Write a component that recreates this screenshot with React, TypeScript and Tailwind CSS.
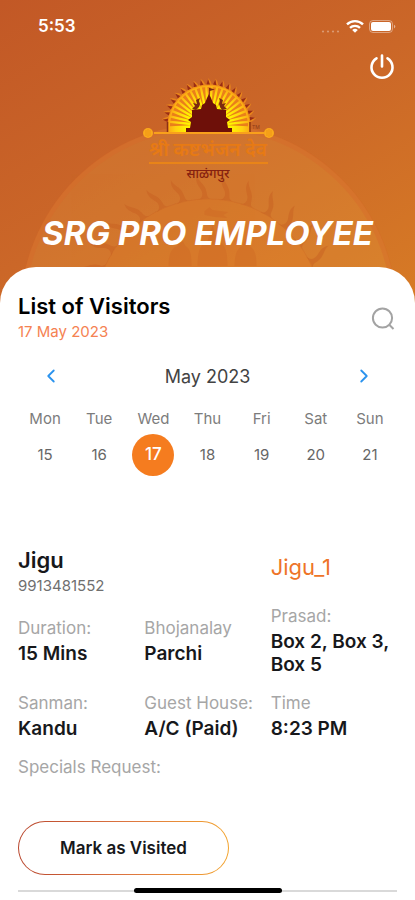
import { useState } from 'react';
import { ChevronLeft, ChevronRight } from 'lucide-react';

const days = [
  { name: 'Mon', date: 15 },
  { name: 'Tue', date: 16 },
  { name: 'Wed', date: 17 },
  { name: 'Thu', date: 18 },
  { name: 'Fri', date: 19 },
  { name: 'Sat', date: 20 },
  { name: 'Sun', date: 21 },
];

const visits = [
  { label: 'Duration:', value: '15 Mins' },
  { label: 'Bhojanalay', value: 'Parchi' },
  { label: 'Prasad:', value: 'Box 2, Box 3, Box 5' },
  { label: 'Sanman:', value: 'Kandu' },
  { label: 'Guest House:', value: 'A/C (Paid)' },
  { label: 'Time', value: '8:23 PM' },
];

function StatusBar() {
  return (
    <div className="flex h-[54px] items-center justify-between pr-[19px] pl-[38px]">
      <span className="text-[17px] font-semibold text-white">5:53</span>
      <svg width="76" height="20" viewBox="0 0 76 20" fill="none">
        <g fill="#fff" opacity="0.35">
          <circle cx="3" cy="14.5" r="1.1" />
          <circle cx="8" cy="14.5" r="1.1" />
          <circle cx="13" cy="14.5" r="1.1" />
          <circle cx="18" cy="14.5" r="1.1" />
        </g>
        <g stroke="#fff" strokeWidth="2.4">
          <path d="M27 7.4a11.5 11.5 0 0 1 16 0" />
          <path d="M30 10.9a7.3 7.3 0 0 1 10 0" />
        </g>
        <path d="M35 15.8l-2.8-2.8a4 4 0 0 1 5.6 0z" fill="#fff" />
        <rect x="49.5" y="3.5" width="23" height="12" rx="3.5" stroke="#fff" opacity="0.4" />
        <rect x="51" y="5" width="20" height="9" rx="2" fill="#fff" />
        <path d="M74 7.8c1.8.6 1.8 3 0 3.6z" fill="#fff" opacity="0.5" />
      </svg>
    </div>
  );
}

// Faded emblem behind the title
function Backdrop() {
  const flames = Array.from({ length: 17 }, (_, i) => -90 + i * 11);
  return (
    <svg
      className="absolute top-0 left-1/2 -translate-x-1/2"
      width="415"
      height="307"
      viewBox="0 0 415 307"
      fill="none"
    >
      <circle cx="208" cy="312" r="188" fill="#eaa844" opacity="0.2" />
      <circle cx="208" cy="312" r="186" stroke="#d8682a" strokeWidth="5" opacity="0.4" />
      <circle cx="208" cy="312" r="113" fill="#e87f22" opacity="0.2" />
      <circle cx="208" cy="312" r="113" stroke="#c65f25" strokeWidth="1" opacity="0.25" />
      <g fill="#c4591f" opacity="0.38">
        {flames.map((a) => (
          <path
            key={a}
            transform={`rotate(${a} 208 312)`}
            d="M201 200c5-2 6-6 4-10-3-5-6-8-4-15 1 6 8 9 9 16 1 4 0 6 4 8-5-1-9 0-13 1z"
          />
        ))}
        <path
          d="M204 211l5-4 3 3 16 2-5 3 4 3-13-1-10-2zM168 266c0-12 3-18 9-20l3-9 5 9c5 3 6 8 6 20zM197 266c0-17 4-22 10-25l5-16 5 16c7 3 10 8 10 25zM234 266c0-12 3-18 8-20l3-7 4 7c5 3 7 8 7 20z"
          opacity="0.6"
        />
      </g>
    </svg>
  );
}

function Logo() {
  const rays = Array.from({ length: 23 }, (_, i) => -88 + i * 8);
  const flames = Array.from({ length: 19 }, (_, i) => -81 + i * 9);
  return (
    <svg width="132" height="112" viewBox="0 0 132 112" role="img" aria-label="Logo">
      <defs>
        <radialGradient id="sun" gradientUnits="userSpaceOnUse" cx="67" cy="52" r="42">
          <stop offset="0.55" stopColor="#fff200" />
          <stop offset="0.8" stopColor="#ffd010" />
          <stop offset="1" stopColor="#fba515" />
        </radialGradient>
        <clipPath id="dome">
          <rect x="18" y="0" width="98" height="59" />
        </clipPath>
      </defs>
      <g clipPath="url(#dome)">
        <circle cx="67" cy="52" r="41" fill="url(#sun)" />
        <path d="M26 51h82v8H26z" fill="url(#sun)" />
        {rays.map((a) => (
          <path key={a} transform={`rotate(${a} 67 52)`} d="M67 34l-1.6-21h3.2z" fill="#ea7f1a" />
        ))}
        <circle cx="67" cy="52" r="41" fill="none" stroke="#f69a17" strokeWidth="1.5" />
        {flames.map((a) => (
          <g key={a} transform={`rotate(${a} 67 52)`}>
            <path d="M65 11q3-1 1-7q4 4 3.5 7z" fill="#e8841c" />
            <path d="M64.5 10.5l1.5-5 2 5z" fill="#9a2c14" />
          </g>
        ))}
      </g>
      <path d="M25.5 48v11M108 48v11" stroke="#8c3015" strokeWidth="1.5" />
      <path
        d="M44 59v-5h4l1-6-3-2 4-3v-7l9-1 1-4 3-2 2-5 2-4 2 4 2 5 3 2 1 4 9 1v7l4 3-3 2 1 6h4v5z"
        fill="#6e1009"
      />
      <path
        d="M67 22v-8h.8l5 1.5-5 1.5v5zM54 36l-4-1 3-3-2-3 4 1-1-4 4-2-1 3 1 3-1 3zM80 36l5-1-3-3 2-3-4 1 1-4-4-2 1 3-1 3 1 3z"
        fill="#7c2a10"
      />
      <path d="M12 59h110" stroke="#f9a01b" strokeWidth="2" />
      <circle cx="6" cy="59" r="5" fill="#fbaa1b" />
      <circle cx="127" cy="59" r="5" fill="#fbaa1b" />
      <path d="M4 56v6M6 55v8M8 56v6M125 56v6M127 55v8M129 56v6" stroke="#e88616" strokeWidth="0.6" />
      <text x="110" y="55" fontSize="5" fill="#8c3a18">TM</text>
      <text x="66" y="82" textAnchor="middle" fontSize="19" fontWeight="600" fill="#e77a14">
        श्री कष्टभंजन देव
      </text>
      <path d="M7 89h119" stroke="#f08a12" strokeWidth="1.5" />
      <text x="66" y="104" textAnchor="middle" fontSize="13" fontWeight="500" fill="#85200f">
        साळंगपुर
      </text>
    </svg>
  );
}

export default function App() {
  const [selected, setSelected] = useState(17);

  return (
    <div className="min-h-screen bg-white font-['Inter','Noto_Sans',sans-serif] text-[#17181b]">
      <header className="relative overflow-hidden bg-linear-[150deg,#c25826_0%,#cb6728_50%,#d77b25_100%] pb-[54px]">
        <Backdrop />
        <div className="relative">
          <StatusBar />
          <div className="flex h-5 justify-end pr-5">
            <button type="button" aria-label="Log out" className="size-[26px]">
              <svg viewBox="0 0 26 26" fill="none" stroke="#fff" strokeWidth="2.6" strokeLinecap="round">
                <path d="M13 1.5v11M7.5 4.3a10.5 10.5 0 1 0 11 0" />
              </svg>
            </button>
          </div>
          <div className="flex justify-center">
            <Logo />
          </div>
          <h1 className="mt-7 text-center text-[33px] leading-[39px] font-bold text-white italic">
            SRG PRO EMPLOYEE
          </h1>
        </div>
      </header>

      <main className="relative -mt-10 rounded-t-[36px] bg-white px-[18px] pt-[27px]">
        <div className="flex items-center justify-between">
          <div>
            <h2 className="text-[22px] leading-6 font-semibold text-black">List of Visitors</h2>
            <p className="mt-1 text-[15px] leading-5 text-[#f58252]">17 May 2023</p>
          </div>
          <button type="button" aria-label="Search" className="mr-[2px] size-6">
            <svg viewBox="0 0 24 24" fill="none" stroke="#a3a3a3" strokeWidth="2">
              <circle cx="11.5" cy="12" r="9.6" />
              <path d="M18.5 19l4 4" />
            </svg>
          </button>
        </div>

        <div className="mt-[14px] flex h-10 items-center justify-between px-[22px]">
          <button type="button" aria-label="Previous week">
            <ChevronLeft className="size-[22px] text-[#2b93ee]" />
          </button>
          <span className="text-[18px] text-[#434343]">May 2023</span>
          <button type="button" aria-label="Next week">
            <ChevronRight className="size-[22px] text-[#2b93ee]" />
          </button>
        </div>

        <div className="mt-[13px] grid grid-cols-7 text-center">
          {days.map((day) => (
            <div key={day.date} className="flex flex-col items-center">
              <span className="text-[15px] leading-5 text-[#7c7c7c]">{day.name}</span>
              <button
                type="button"
                onClick={() => setSelected(day.date)}
                className={
                  day.date === selected
                    ? 'mt-[5px] size-[42px] rounded-full bg-[#f57c1f] text-[17px] font-medium text-white'
                    : 'mt-[5px] size-[42px] rounded-full text-[15px] text-[#666]'
                }
              >
                {day.date}
              </button>
            </div>
          ))}
        </div>

        <section className="mt-[72px]">
          <div className="grid grid-cols-3 items-start">
            <div className="col-span-2">
              <h3 className="text-[22px] leading-6 font-semibold">Jigu</h3>
              <p className="mt-1 text-[15px] leading-5 text-[#6f6f6f]">9913481552</p>
            </div>
            <p className="text-[22px] leading-[38px] text-[#ee7428]">Jigu_1</p>
          </div>

          <dl className="mt-2 grid grid-cols-3 items-center gap-y-[15px]">
            {visits.map((item) => (
              <div key={item.label}>
                <dt className="text-[17px] leading-6 whitespace-nowrap text-[#a6a6a6]">{item.label}</dt>
                <dd className="mt-[2px] text-[19px] leading-[23px] font-semibold">{item.value}</dd>
              </div>
            ))}
          </dl>
          <p className="mt-[15px] text-[17px] leading-6 text-[#a6a6a6]">Specials Request:</p>

          <button
            type="button"
            className="mt-[42px] block rounded-full bg-linear-to-r from-[#b8452c] via-[#dc7440] to-[#f3a32c] p-px"
          >
            <span className="block rounded-full bg-white px-[41px] py-[14px] text-[17px] leading-6 font-semibold">
              Mark as Visited
            </span>
          </button>
        </section>

        <div className="relative mt-[13px] flex h-[5px] items-center">
          <hr className="w-full border-t-2 border-[#d9d9d9]" />
          <div className="absolute left-1/2 h-[5px] w-[148px] -translate-x-1/2 rounded-full bg-black" />
        </div>
      </main>
    </div>
  );
}
